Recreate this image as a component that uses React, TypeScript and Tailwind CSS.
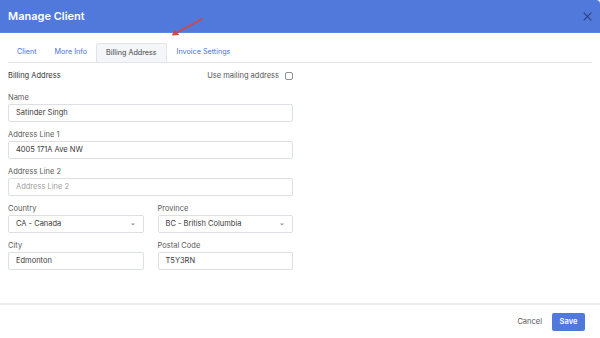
import React from "react";

const font = { fontFamily: "Inter, 'Noto Sans', sans-serif" };

function Field({ label, value, placeholder, select, className = "" }: { label: string; value?: string; placeholder?: string; select?: boolean; className?: string }) {
  return (
    <div className={"mb-[8px] " + className}>
      <div className="text-[7.5px] leading-[10px] mb-[1px] text-[#5a5a5a]">{label}</div>
      <div className="h-[18px] border border-[#dcdfe3] rounded-[2px] flex items-center px-[7px] text-[7.5px] bg-white">
        {value ? <span className="text-[#3a3a3a] flex-1">{value}</span> : <span className="text-[#a0a0a0] flex-1">{placeholder}</span>}
        {select && (
          <svg width="4" height="3" viewBox="0 0 4 3" className="mr-[1px]">
            <path d="M0 0.5 L4 0.5 L2 2.5 Z" fill="#999" />
          </svg>
        )}
      </div>
    </div>
  );
}

export default function App() {
  return (
    <div className="w-[600px] h-[338px] bg-white relative overflow-hidden flex flex-col" style={font}>
      <div className="h-[33px] bg-[#5179dc] border-b border-[#5a84e8] flex items-center justify-between pl-[8px] pr-[8px] shrink-0 rounded-tr-[4px]">
        <div className="text-white text-[11px] font-semibold">Manage Client</div>
        <svg width="9" height="9" viewBox="0 0 9 9" className="mt-[1px]">
          <path d="M0.7 0.7 L8.3 8.3 M8.3 0.7 L0.7 8.3" stroke="#2f4280" strokeWidth="1.2" />
        </svg>
      </div>
      <div className="px-[8px] pt-[10px] flex-1">
        <div className="flex border-b border-[#e3e5e8] h-[20px] items-stretch text-[7.2px]">
          <div className="px-[9px] flex items-center text-[#4a72d8]">Client</div>
          <div className="px-[9px] flex items-center text-[#4a72d8]">More Info</div>
          <div className="px-[9px] flex items-center text-[#444] bg-[#f4f6f9] border border-b-0 border-[#e1e4e8] rounded-t-[2px]">Billing Address</div>
          <div className="px-[10px] flex items-center text-[#4a72d8]">Invoice Settings</div>
        </div>
        <div className="w-[285px] pt-[8px]">
          <div className="flex items-center justify-between h-[10px] mb-[12px]">
            <div className="text-[7.5px] text-[#333]">Billing Address</div>
            <div className="flex items-center gap-[6px]">
              <span className="text-[7.5px] text-[#555]">Use mailing address</span>
              <div className="w-[8px] h-[8px] border border-[#8a8f96] rounded-[2px]" />
            </div>
          </div>
          <Field label="Name" value="Satinder Singh" />
          <Field label="Address Line 1" value="4005 171A Ave NW" />
          <Field label="Address Line 2" placeholder="Address Line 2" />
          <div className="grid grid-cols-2 gap-x-[14px]">
            <Field label="Country" value="CA - Canada" select />
            <Field label="Province" value="BC - British Columbia" select />
            <Field label="City" value="Edmonton" />
            <Field label="Postal Code" value="T5Y3RN" />
          </div>
        </div>
      </div>
      <div className="h-[35px] border-t-2 border-[#eeeeee] flex items-center justify-end pr-[15px] shrink-0">
        <span className="text-[7.5px] text-[#555] mr-[10px]">Cancel</span>
        <div className="w-[33px] h-[18px] bg-[#5179dc] rounded-[2px] text-white text-[7.5px] font-semibold flex items-center justify-center">Save</div>
      </div>
      <svg className="absolute left-0 top-0" width="600" height="338" style={{ pointerEvents: "none" }}>
        <path d="M202 19 L176 33" stroke="#d8453b" strokeWidth="1.6" strokeLinecap="round" />
        <path d="M172.5 35 L175 30.5 L178.5 34.5 Z" fill="#d8453b" stroke="#d8453b" strokeWidth="1" strokeLinejoin="round" />
      </svg>
    </div>
  );
}
